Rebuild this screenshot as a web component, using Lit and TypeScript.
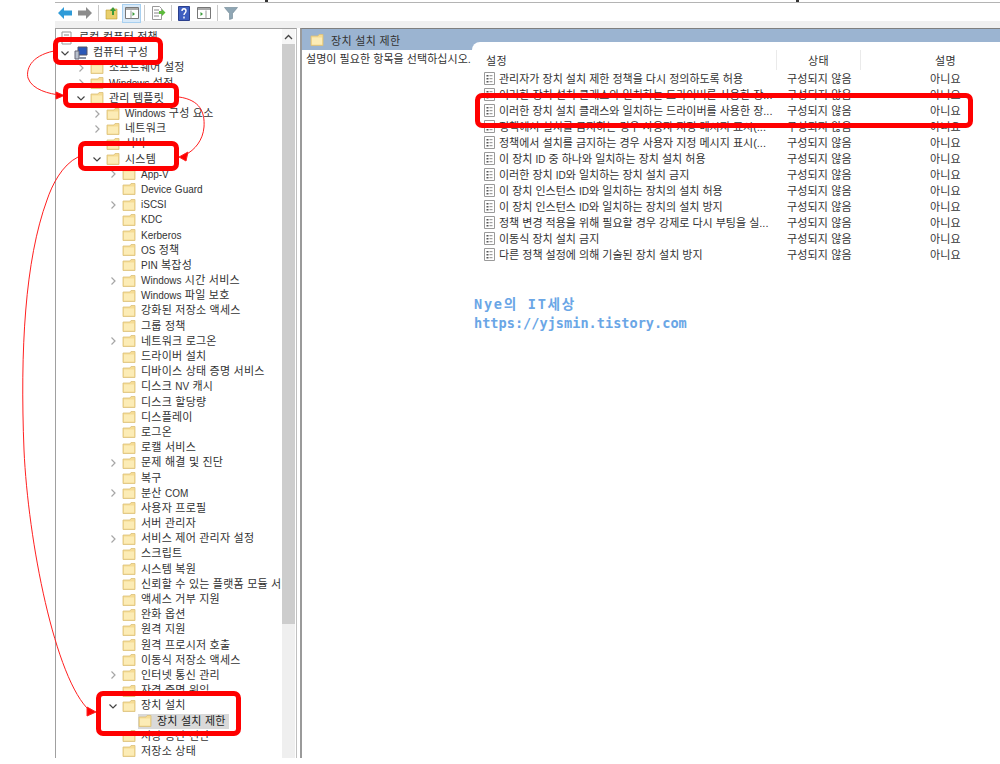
import { LitElement, html, css, svg } from "lit";
import { customElement } from "lit/decorators.js";

type Row = { t: string; d: number; a?: "r" | "d"; sel?: boolean; ic?: "pc" | "doc" };
const rows: Row[] = [
  { t: "로컬 컴퓨터 정책", d: 0, ic: "doc" },
  { t: "컴퓨터 구성", d: 0, a: "d", ic: "pc" },
  { t: "소프트웨어 설정", d: 1, a: "r" },
  { t: "Windows 설정", d: 1, a: "r" },
  { t: "관리 템플릿", d: 1, a: "d" },
  { t: "Windows 구성 요소", d: 2, a: "r" },
  { t: "네트워크", d: 2, a: "r" },
  { t: "서버", d: 2 },
  { t: "시스템", d: 2, a: "d" },
  { t: "App-V", d: 3, a: "r" },
  { t: "Device Guard", d: 3 },
  { t: "iSCSI", d: 3, a: "r" },
  { t: "KDC", d: 3 },
  { t: "Kerberos", d: 3 },
  { t: "OS 정책", d: 3 },
  { t: "PIN 복잡성", d: 3 },
  { t: "Windows 시간 서비스", d: 3, a: "r" },
  { t: "Windows 파일 보호", d: 3 },
  { t: "강화된 저장소 액세스", d: 3 },
  { t: "그룹 정책", d: 3 },
  { t: "네트워크 로그온", d: 3, a: "r" },
  { t: "드라이버 설치", d: 3 },
  { t: "디바이스 상태 증명 서비스", d: 3 },
  { t: "디스크 NV 캐시", d: 3 },
  { t: "디스크 할당량", d: 3 },
  { t: "디스플레이", d: 3 },
  { t: "로그온", d: 3 },
  { t: "로캘 서비스", d: 3 },
  { t: "문제 해결 및 진단", d: 3, a: "r" },
  { t: "복구", d: 3 },
  { t: "분산 COM", d: 3, a: "r" },
  { t: "사용자 프로필", d: 3 },
  { t: "서버 관리자", d: 3 },
  { t: "서비스 제어 관리자 설정", d: 3, a: "r" },
  { t: "스크립트", d: 3 },
  { t: "시스템 복원", d: 3 },
  { t: "신뢰할 수 있는 플랫폼 모듈 서비스", d: 3 },
  { t: "액세스 거부 지원", d: 3 },
  { t: "완화 옵션", d: 3 },
  { t: "원격 지원", d: 3 },
  { t: "원격 프로시저 호출", d: 3 },
  { t: "이동식 저장소 액세스", d: 3 },
  { t: "인터넷 통신 관리", d: 3, a: "r" },
  { t: "자격 증명 위임", d: 3 },
  { t: "장치 설치", d: 3, a: "d" },
  { t: "장치 설치 제한", d: 4, sel: true },
  { t: "저장 공간 진단", d: 3 },
  { t: "저장소 상태", d: 3 },
];
const settings = [
  "관리자가 장치 설치 제한 정책을 다시 정의하도록 허용",
  "이러한 장치 설치 클래스와 일치하는 드라이버를 사용한 장...",
  "이러한 장치 설치 클래스와 일치하는 드라이버를 사용한 장...",
  "정책에서 설치를 금지하는 경우 사용자 지정 메시지 표시(...",
  "정책에서 설치를 금지하는 경우 사용자 지정 메시지 표시(...",
  "이 장치 ID 중 하나와 일치하는 장치 설치 허용",
  "이러한 장치 ID와 일치하는 장치 설치 금지",
  "이 장치 인스턴스 ID와 일치하는 장치의 설치 허용",
  "이 장치 인스턴스 ID와 일치하는 장치의 설치 방지",
  "정책 변경 적용을 위해 필요할 경우 강제로 다시 부팅을 실...",
  "이동식 장치 설치 금지",
  "다른 정책 설정에 의해 기술된 장치 설치 방지",
];
const folder = svg`<svg class="fold" viewBox="0 0 14 14" width="14" height="14"><path d="M1 3h7l1-1.500h4v11H1z" fill="#f6dc94" stroke="#dcc07a" stroke-width=".8"/><path d="M2 4.500h10v7H2z" fill="#fcecb6"/></svg>`;
const page = svg`<svg class="pg" viewBox="0 0 11 13" width="11" height="13"><path d="M.5.5h10v12H.5z" fill="#fff" stroke="#9a9a9a"/><path d="M2.5 3h2v1.4h-2zM2.5 6h2v1.4h-2zM2.5 9h2v1.4h-2z" fill="#555"/><path d="M5.5 3.7h3M5.5 6.7h3M5.5 9.7h3" stroke="#8a8a8a"/></svg>`;
const mixed = (s: string) =>
  s.split(/([A-Za-z][A-Za-z\-]*)/).map((p, i) => (i % 2 ? html`<span class="lat">${p}</span>` : p));

@customElement("app-root")
export class AppRoot extends LitElement {
  static styles = css`
    :host { display: block; width: 1000px; height: 764px; position: relative; background: #fff; overflow: hidden;
      font-family: "Liberation Sans", "Noto Sans CJK KR", sans-serif; font-size: 11px; color: #333; }
    .win { margin-left: 55px; height: 756px; display: flex; flex-direction: column; border-top: 1px solid #b4b4b4; margin-top: 2px; box-sizing: border-box; }
    .tb { height: 25px; box-sizing: border-box; padding-bottom: 5px; flex: none; display: flex; align-items: center; background: linear-gradient(#fff 18px, #f0f0f0 18px); }
    .tb svg { display: block; flex: none; }
    .sep { width: 1px; height: 16px; background: #c8c8c8; margin: 0 3px; flex: none; }
    .btn { width: 20px; height: 19px; display: flex; align-items: center; justify-content: center; flex: none; box-sizing: border-box; }
    .btn.on { width: 19px; background: #d8e9f8; border: 1px solid #a8d0f0; }
    .btn.help { width: 17px; margin-right: 2px; }
    .main { flex: 1; display: flex; gap: 3px; min-height: 0; background: #fff; }
    .tree { width: 242px; flex: none; box-sizing: border-box; border-left: 1px solid #a0a0a0; border-top: 1px solid #a0a0a0; border-right: 1px solid #c0c0c0; background: #fff; display: flex; overflow: hidden; }
    .list { flex: 1; min-width: 0; overflow: hidden; padding-top: 1px; }
    .r { height: 15.2px; display: flex; align-items: center; white-space: nowrap; }
    .arr { width: 10px; height: 10px; flex: none; margin-right: 4px; }
    .fold { flex: none; margin-right: 5px; }
    .lbl { line-height: 13px; letter-spacing: .22px; }
    .lat { font-size: 10px; letter-spacing: 0; }
    .selwrap { display: flex; align-items: center; height: 15px; background: #d9d9d9; padding-right: 3px; color: #222; }
    .sb { width: 13px; margin-right: 1px; flex: none; background: #efefef; display: flex; flex-direction: column; }
    .up { height: 15px; display: flex; align-items: center; justify-content: center; flex: none; background: #f6f6f6; }
    .thumb { width: 13px; height: 580px; background: #cdcdcd; flex: none; }
    .pane { flex: 1; min-width: 0; box-sizing: border-box; border-left: 2px solid #9a9a9a; border-top: 1px solid #7f7f7f; background: #fff; display: flex; flex-direction: column; }
    .head { height: 21px; flex: none; background: #9bb4d1; display: flex; align-items: center; gap: 7px; padding-left: 8px; letter-spacing: .32px; color: #333; }
    .head .fold { margin: 0; }
    .body { flex: 1; display: flex; min-height: 0; }
    .desc { width: 170px; flex: none; padding: 2px 0 0 4px; box-sizing: border-box; white-space: nowrap; letter-spacing: .05px; line-height: 15px; }
    .tbl { flex: 1; margin-top: -8px; border-top-left-radius: 8px; background: #fff; padding: 8px 0 0 12px; }
    .th { display: grid; grid-template-columns: 292px 84px 1fr; height: 20px; align-items: center; }
    .th > div { height: 20px; display: flex; align-items: center; letter-spacing: .3px; }
    .th .first { padding-left: 2px; }
    .th .c { justify-content: center; border-left: 1px solid #eaeaea; }
    .th .e { border-left: 1px solid #eaeaea; padding-left: 74px; }
    .tr { display: grid; grid-template-columns: 292px 84px 1fr; height: 16px; align-items: center; white-space: nowrap; }
    .tr .n { display: flex; align-items: center; gap: 4px; overflow: hidden; }
    .tr .s, .tr .v { letter-spacing: .12px; }
    .tr .s { padding-left: 11px; }
    .tr .v { padding-left: 70px; }
    .pg { flex: none; }
    .box { position: absolute; box-sizing: border-box; border: 5px solid #ff0000; border-radius: 7px; }
    .b1 { left: 53px; top: 37px; width: 110px; height: 28px; }
    .b2 { left: 63px; top: 83px; width: 116px; height: 25px; }
    .b3 { left: 78px; top: 141px; width: 101px; height: 30px; }
    .b4 { left: 96px; top: 691px; width: 145px; height: 45px; }
    .b5 { left: 475px; top: 93px; width: 498px; height: 35px; }
    .ov { position: absolute; left: 0; top: 0; pointer-events: none; }
    .wm { position: absolute; left: 474px; top: 295px; color: #6aa6e6; font-family: "DejaVu Sans Mono", "Noto Sans CJK KR", monospace; font-size: 13.6px; line-height: 19px; font-weight: 700; white-space: nowrap; }
    .wm .l1 { letter-spacing: 1.7px; }
    .tick { position: absolute; top: 0; width: 3px; height: 2px; background: #333; }
    .t1 { left: 265px; }
    .t2 { left: 796px; }
  `;
  render() {
    return html`
      <div class="win">
        <div class="tb">
          <div class="btn"><svg width="16" height="14" viewBox="0 0 16 14"><path d="M1 7l6-6v3.500h8v5H7V13z" fill="#2f9bd8"/></svg></div>
          <div class="btn"><svg width="16" height="14" viewBox="0 0 16 14"><path d="M15 7L9 1v3.500H1v5h8V13z" fill="#8c8c8c"/></svg></div>
          <div class="sep"></div>
          <div class="btn"><svg width="14" height="14" viewBox="0 0 14 14"><path d="M1 4h4l1-1h6v10H1z" fill="#e9cf6c" stroke="#b89a30" stroke-width=".6"/><path d="M8 1L5 5h2v4h2V5h2z" fill="#3c9a3c"/></svg></div>
          <div class="btn on"><svg width="14" height="12" viewBox="0 0 14 12"><path d="M.5.5h13v11H.5z" fill="#fff" stroke="#777"/><path d="M1 1h12v2H1z" fill="#aaa"/><path d="M6 3.5v8" stroke="#999"/><path d="M7.5 5v4l2.500-2z" fill="#3a9a3a"/></svg></div>
          <div class="sep"></div>
          <div class="btn"><svg width="16" height="14" viewBox="0 0 16 14"><path d="M2.500.5h7l2 2v11h-9z" fill="#fff" stroke="#999"/><path d="M4 4h5M4 7h5M4 10h5" stroke="#888"/><path d="M9 5h3V3l3.500 3.500L12 10V8H9z" fill="#5dbb3c"/></svg></div>
          <div class="sep"></div>
          <div class="btn help"><svg width="12" height="15" viewBox="0 0 12 15"><path d="M.5.500h11v14H.5z" fill="#3f5fc0" stroke="#2b3f8c"/><path d="M4 5c0-3 4-3 4 0 0 2-2 2-2 4M6 10.500v2" stroke="#fff" stroke-width="1.400" fill="none"/></svg></div>
          <div class="btn"><svg width="14" height="12" viewBox="0 0 14 12"><path d="M.5.5h13v11H.5z" fill="#fff" stroke="#777"/><path d="M1 1h12v2H1z" fill="#aaa"/><path d="M9 3.500v8" stroke="#999"/><path d="M3.500 5v4L6 7z" fill="#3a9a3a"/></svg></div>
          <div class="sep"></div>
          <div class="btn"><svg width="14" height="13" viewBox="0 0 14 13"><path d="M.5.500h13L8.500 6.500v5l-3 1v-6z" fill="#8fa6b4" stroke="#6d8492" stroke-width=".6"/></svg></div>
        </div>
        <div class="main">
          <div class="tree">
            <div class="list">
              ${rows.map((r) => html`<div class="r" style="padding-left:${r.ic ? 4 : 4 + (r.d - 1) * 16 + 16}px">
                ${r.ic === "doc" ? svg`<svg class="fold" viewBox="0 0 14 14" width="14" height="14"><path d="M2 1h9v12H2z" fill="#fff" stroke="#999"/><path d="M4 4h5M4 7h5" stroke="#888"/></svg>` : ""}
                ${r.a || r.ic === "pc" ? svg`<svg class="arr" viewBox="0 0 10 10">${(r.a === "d") ? svg`<path d="M1.500 3.500L5 7l3.500-3.500" fill="none" stroke="#444" stroke-width="1.200"/>` : svg`<path d="M3.500 1.500L7 5 3.500 8.500" fill="none" stroke="#a6a6a6" stroke-width="1.200"/>`}</svg>` : r.ic ? "" : html`<span class="arr"></span>`}
                ${r.ic === "pc" ? svg`<svg class="fold" viewBox="0 0 14 14" width="14" height="14"><path d="M4 1h9v8H4z" fill="#2a58b8" stroke="#556"/><path d="M1 5h4v8H1z" fill="#b8c0cc" stroke="#667"/><path d="M5 11h7v2H5z" fill="#8a93a3"/></svg>` : ""}
                ${r.sel ? html`<span class="selwrap">${folder}<span class="lbl">${r.t}</span></span>` : html`${r.ic ? "" : folder}<span class="lbl">${mixed(r.t)}</span>`}
              </div>`)}
            </div>
            <div class="sb">
              <div class="up"><svg width="9" height="6" viewBox="0 0 9 6"><path d="M1 5l3.500-3.500L8 5" fill="none" stroke="#444" stroke-width="1.300"/></svg></div>
              <div class="thumb"></div>
            </div>
          </div>
          <div class="pane">
            <div class="head">${folder}<span>장치 설치 제한</span></div>
            <div class="body">
              <div class="desc">설명이 필요한 항목을 선택하십시오.</div>
              <div class="tbl">
                <div class="th"><div class="first">설정</div><div class="c">상태</div><div class="e">설명</div></div>
                ${settings.map((s) => html`<div class="tr"><div class="n">${page}<span>${mixed(s)}</span></div><div class="s">구성되지 않음</div><div class="v">아니요</div></div>`)}
              </div>
            </div>
          </div>
        </div>
      </div>
      <svg class="ov" width="1000" height="764" viewBox="0 0 1000 764" fill="none" stroke="#ff2020" stroke-width="1">
        <path d="M54 51C30 56 26 70 28 78C32 90 50 94 60 95"/>
        <path d="M56 92l8 3.500-8 3.500z" fill="#ff0000"/>
        <path d="M179 97C200 100 205 112 204 127C203 140 195 150 185 155"/>
        <path d="M179 157l9-5-2 9z" fill="#ff0000"/>
        <path d="M78 157C62 165 52 185 47 200C25 260 20 350 24 450C28 540 55 680 90 711"/>
        <path d="M87 707l9 5-9 4z" fill="#ff0000"/>
      </svg>
      <div class="box b1"></div><div class="box b2"></div><div class="box b3"></div><div class="box b4"></div><div class="box b5"></div>
      <div class="wm"><span class="l1">Nye의 IT세상</span><br />https://yjsmin.tistory.com</div>
      <div class="tick t1"></div><div class="tick t2"></div>
    `;
  }
}
